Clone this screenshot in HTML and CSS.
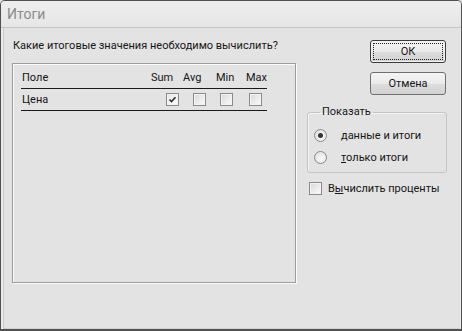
FILE: index.html
```html
<!DOCTYPE html>
<html lang="ru">
<head>
<meta charset="utf-8">
<title>Итоги</title>
<link rel="stylesheet" href="styles.css">
</head>
<body>
<div class="window">
  <div class="titlebar">Итоги</div>
  <div class="client">
    <div class="left">
      <div class="prompt">Какие итоговые значения необходимо вычислить?</div>
      <div class="listbox">
        <div class="row head">
          <span class="field">Поле</span>
          <span class="h">Sum</span>
          <span class="h">Avg</span>
          <span class="h">Min</span>
          <span class="h">Max</span>
        </div>
        <div class="row data">
          <span class="field">Цена</span>
          <span class="cell c-sum"><span class="cb checked"><svg width="11" height="11" viewBox="0 0 11 11"><path d="M2.5 5.5 L4.5 7.5 L8.5 3.2" fill="none" stroke="#2a2a2a" stroke-width="1.6"/></svg></span></span>
          <span class="cell c-avg"><span class="cb"></span></span>
          <span class="cell c-min"><span class="cb"></span></span>
          <span class="cell c-max"><span class="cb"></span></span>
        </div>
      </div>
    </div>
    <div class="right">
      <button class="btn default"><span class="focus">ОК</span></button>
      <button class="btn">Отмена</button>
      <fieldset class="group">
        <legend>Показать</legend>
        <div class="opt"><span class="radio on"></span><span class="opt-text"><u>д</u>анные и итоги</span></div>
        <div class="opt"><span class="radio"></span><span class="opt-text"><u>т</u>олько итоги</span></div>
      </fieldset>
      <div class="pct"><span class="cb"></span><span class="pct-text">В<u>ы</u>числить проценты</span></div>
    </div>
  </div>
</div>
</body>
</html>
```

FILE: styles.css
```css
* { box-sizing: border-box; }
html, body { margin: 0; padding: 0; }
body {
  width: 462px;
  height: 331px;
  overflow: hidden;
  background: #e3e3e3;
  font-family: Roboto, "Liberation Sans", Arial, sans-serif;
  font-size: 11px;
  color: #151515;
}
.window {
  width: 462px;
  height: 331px;
  border: 1px solid #505050;
  border-bottom-width: 2px;
  border-radius: 5px 5px 0 0;
  background: #e3e3e3;
  display: flex;
  flex-direction: column;
  overflow: hidden;
}
.titlebar {
  height: 27px;
  flex: none;
  padding-left: 6px;
  line-height: 26px;
  font-size: 14px;
  color: #8a8a8a;
  background: linear-gradient(#eeeeee, #e6e6e6);
  border-bottom: 1px solid #c4c4c4;
}
.client {
  flex: 1;
  display: flex;
  box-shadow: inset 2px 0 0 #ececec, inset 3px 0 0 #c9c9c9, inset -1px 0 0 #ececec, inset 0 -1px 0 #d0d0d0;
}
.left {
  width: 284px;
  margin-left: 11px;
  padding-top: 10px;
}
.prompt {
  line-height: 16px;
  padding-left: 1px;
  white-space: nowrap;
}
.listbox {
  margin-top: 9px;
  height: 220px;
  border: 1px solid #9c9c9c;
  box-shadow: 1px 1px 0 #fbfbfb, inset 1px 1px 0 #fbfbfb;
  padding: 6px 0 0 8px;
}
.row {
  display: grid;
  grid-template-columns: 130px 32px 33px 30px 21px;
  align-items: center;
  width: 246px;
  border-bottom: 1px solid #1a1a1a;
}
.head { height: 19px; padding-bottom: 3px; }
.data { height: 22px; }
.field { padding-left: 1px; }
.h { white-space: nowrap; }
.cell { display: flex; }
.c-sum { padding-left: 15px; }
.c-avg { padding-left: 10px; }
.c-min { padding-left: 4px; }
.c-max { padding-left: 3px; }
.cb {
  width: 13px;
  height: 13px;
  flex: none;
  border: 1px solid #8a8a8a;
  background: linear-gradient(135deg, #d8d8d8, #fbfbfb);
  box-shadow: inset 0 0 0 1px #f4f4f4;
  display: flex;
  align-items: center;
  justify-content: center;
}
.cb svg { display: block; }
.checked { background: linear-gradient(135deg, #e6e6e6, #fdfdfd); }
.right {
  width: 140px;
  margin-left: 11px;
  padding-top: 12px;
  display: flex;
  flex-direction: column;
}
.btn {
  align-self: flex-end;
  margin-right: 1px;
  width: 76px;
  height: 23px;
  border: 1px solid #707070;
  border-radius: 3px;
  background: linear-gradient(#f4f4f4 0%, #ebebeb 50%, #dddddd 51%, #d2d2d2 100%);
  font-family: Roboto, "Liberation Sans", Arial, sans-serif;
  font-size: 11px;
  color: #151515;
  padding: 0;
  display: flex;
  align-items: center;
  justify-content: center;
}
.btn + .btn { margin-top: 9px; }
.default {
  border-color: #3c3c3c;
  box-shadow: inset 0 0 0 1px #f0f0f0;
  padding: 2px;
}
.focus {
  display: flex;
  align-items: center;
  justify-content: center;
  width: 100%;
  height: 100%;
  border: 1px dotted #222;
}
.group {
  margin: 9px 0 0 0;
  padding: 4px 0 4px 6px;
  border: 1px solid #c4c4c4;
  border-radius: 3px;
  box-shadow: inset 1px 1px 0 #f4f4f4;
}
.group legend {
  padding: 0 2px;
  margin-left: 6px;
  line-height: 16px;
}
.opt {
  height: 22px;
  display: flex;
  align-items: center;
}
.radio {
  width: 13px;
  height: 13px;
  border-radius: 50%;
  border: 1px solid #8a8a8a;
  background: radial-gradient(circle at 60% 60%, #fcfcfc, #d8d8d8);
  display: flex;
  align-items: center;
  justify-content: center;
}
.radio.on::after {
  content: "";
  width: 5px;
  height: 5px;
  border-radius: 50%;
  background: #333;
}
.opt-text { margin-left: 14px; }
.pct {
  margin-top: 7px;
  margin-left: 2px;
  height: 16px;
  display: flex;
  align-items: center;
}
.pct-text { margin-left: 6px; white-space: nowrap; }
```
